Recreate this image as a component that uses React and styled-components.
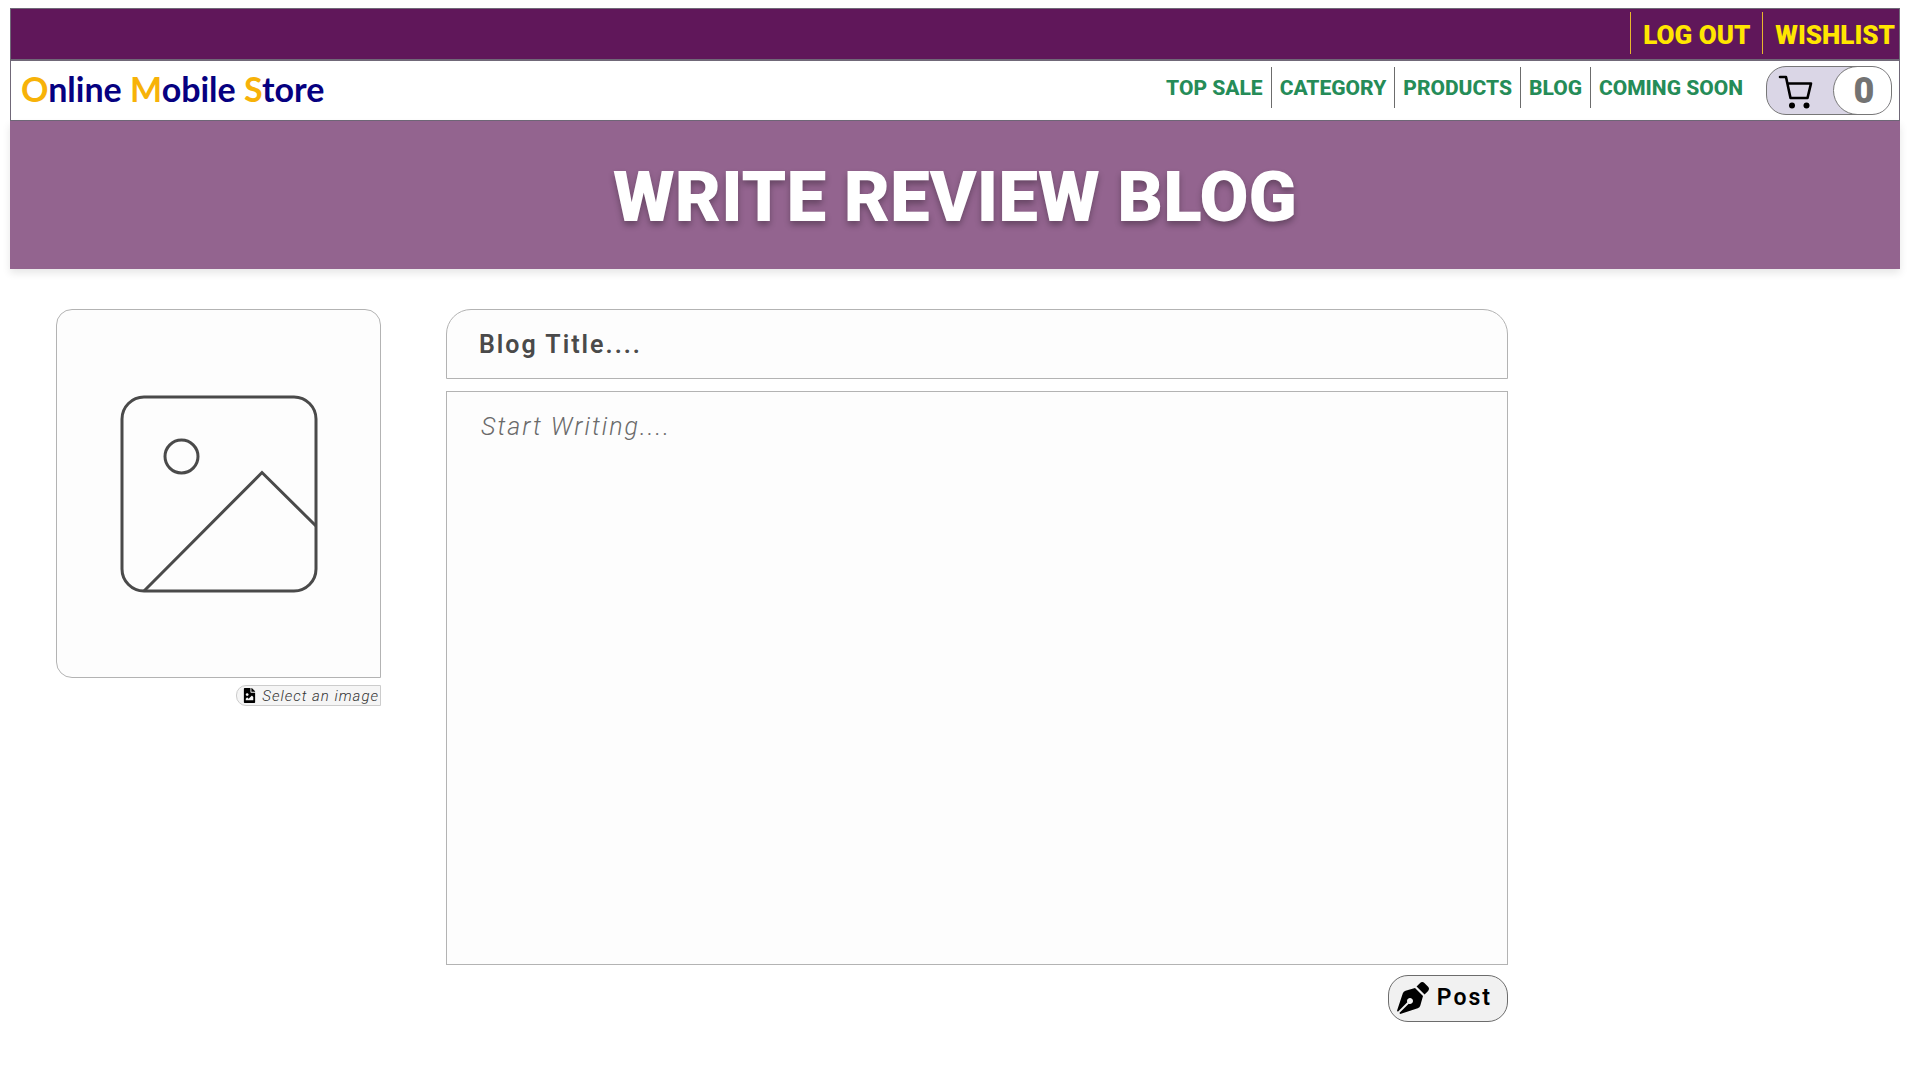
import React from "react";
import styled, { createGlobalStyle } from "styled-components";
import { FaPenNib, FaFileImage } from "react-icons/fa";

const GlobalStyle = createGlobalStyle`
  * { box-sizing: border-box; }
  body {
    margin: 0;
    background: #fff;
    font-family: Roboto, "Open Sans", sans-serif;
  }
`;

const display = `Roboto, "Open Sans", sans-serif`;

const Page = styled.div`
  padding: 8px 20px 48px 10px;
`;

const TopBar = styled.nav`
  display: flex;
  justify-content: flex-end;
  align-items: flex-start;
  height: 52px;
  padding-top: 3px;
  border: 1px solid #706878;
  background: #60175a;
`;

const TopLink = styled.a`
  height: 42px;
  padding: 0 ${(p) => (p.$last ? 4 : 12)}px 0 12px;
  border-left: 1px solid #e8b82c;
  color: #ffe600;
  font: 900 26px/46px ${display};
  text-decoration: none;
  text-transform: uppercase;
`;

const Header = styled.header`
  display: flex;
  align-items: center;
  height: 61px;
  padding: 0 7px 0 10px;
  border: 1px solid #706878;
`;

const Logo = styled.a`
  margin-right: auto;
  padding-bottom: 4px;
  color: #060080;
  font: 700 34px/40px Lato, sans-serif;
  text-decoration: none;
  white-space: nowrap;
`;

const Capital = styled.span`
  color: #f7b208;
`;

const MainNav = styled.nav`
  display: flex;
  padding-bottom: 6px;
`;

const NavLink = styled.a`
  height: 41px;
  padding: 0 8px;
  border-left: ${(p) => (p.$first ? 0 : 1)}px solid #6c6c6c;
  color: #258c58;
  font: 800 21px/42px ${display};
  text-decoration: none;
  text-transform: uppercase;
  white-space: nowrap;
`;

const CartButton = styled.button`
  display: flex;
  justify-content: space-between;
  align-items: stretch;
  width: 126px;
  height: 49px;
  margin-left: 15px;
  padding: 0;
  overflow: hidden;
  border: 1px solid #777;
  border-radius: 20px;
  background: #dad6e6;
`;

const CartIcon = styled.svg`
  width: 36px;
  height: 36px;
  margin: 7px 0 0 11px;
`;

const CartCount = styled.span`
  width: 59px;
  margin: -1px;
  padding-left: 3px;
  border: 1px solid #777;
  border-radius: 25px 20px 20px 25px;
  background: #fff;
  color: #737373;
  font: 900 36px/48px ${display};
  text-align: center;
`;

const Banner = styled.div`
  display: flex;
  justify-content: center;
  align-items: center;
  height: 148px;
  padding-top: 4px;
  background: #93648f;
  box-shadow: 0 4px 8px rgba(0, 0, 0, 0.1);
`;

const Title = styled.h1`
  margin: 0;
  color: #fff;
  font: 900 71px/80px ${display};
  text-shadow: 0 4px 6px rgba(0, 0, 0, 0.3);
  text-transform: uppercase;
`;

const Editor = styled.form`
  display: flex;
  align-items: flex-start;
  gap: 65px;
  padding: 40px 46px 0;
`;

const ImageColumn = styled.div`
  display: flex;
  flex: 0 0 325px;
  flex-direction: column;
  align-items: flex-end;
  gap: 7px;
`;

const Preview = styled.div`
  display: flex;
  justify-content: center;
  align-items: center;
  width: 100%;
  height: 369px;
  border: 1px solid #b3b3b3;
  border-radius: 16px 16px 0 16px;
  background: #fdfdfd;
`;

const PictureIcon = styled.svg`
  width: 198px;
  height: 198px;
  fill: none;
  stroke: #4a4a4a;
  stroke-width: 3;
`;

const SelectImage = styled.label`
  position: relative;
  display: flex;
  align-items: center;
  gap: 5px;
  height: 21px;
  padding: 0 1px 0 5px;
  border: 1px solid #ccc;
  border-radius: 10px 0 0 10px;
  background: #f5f5f5;
  color: #333;
  font-size: 15px;
  font-style: italic;
  font-weight: 300;
  letter-spacing: 1px;
  cursor: pointer;

  svg { color: #000; }
`;

const HiddenFile = styled.input`
  position: absolute;
  inset: 0;
  width: 100%;
  height: 100%;
  opacity: 0;
`;

const TextColumn = styled.div`
  display: flex;
  flex: 0 1 1062px;
  flex-direction: column;
  min-width: 0;
`;

const BlogTitle = styled.input`
  height: 70px;
  margin-bottom: 12px;
  padding: 0 32px;
  border: 1px solid #b3b3b3;
  border-radius: 25px 25px 0 0;
  background: #fdfdfd;
  color: #4a4a4a;
  font: 600 25px/32px Roboto, sans-serif;
  letter-spacing: 2px;

  &::placeholder { color: #4a4a4a; opacity: 1; }
`;

const BlogText = styled.textarea`
  height: 574px;
  margin-bottom: 10px;
  padding: 19px 34px;
  border: 1px solid #b3b3b3;
  background: #fdfdfd;
  font: italic 300 25px/32px Roboto, sans-serif;
  letter-spacing: 2px;
  resize: none;

  &::placeholder { color: #6a6a6a; opacity: 1; }
`;

const PostButton = styled.button`
  display: flex;
  align-items: center;
  align-self: flex-end;
  gap: 8px;
  height: 47px;
  padding: 0 15px 2px 8px;
  border: 1px solid #6c6c6c;
  border-radius: 20px;
  background: #f1f1f1;
  color: #000;
  font: 600 23px/32px Roboto, sans-serif;
  letter-spacing: 2px;
`;

const navItems = ["Top Sale", "Category", "Products", "Blog", "Coming Soon"];

export default function App() {
  return (
    <Page>
      <GlobalStyle />
      <TopBar aria-label="Account">
        <TopLink href="#logout">Log out</TopLink>
        <TopLink href="#wishlist" $last>Wishlist</TopLink>
      </TopBar>
      <Header>
        <Logo href="#home">
          <Capital>O</Capital>nline <Capital>M</Capital>obile <Capital>S</Capital>tore
        </Logo>
        <MainNav aria-label="Main">
          {navItems.map((item, i) => (
            <NavLink key={item} href="#nav" $first={i === 0}>{item}</NavLink>
          ))}
        </MainNav>
        <CartButton type="button" aria-label="Cart, 0 items">
          <CartIcon viewBox="0 0 36 36" fill="none" stroke="#000" strokeWidth="2.6" strokeLinecap="round" strokeLinejoin="round">
            <path d="M2 3h6l4.500 21h17l3.500-14.500H9.500" />
            <circle cx="14" cy="31.500" r="3" fill="#000" stroke="none" />
            <circle cx="28.500" cy="31.500" r="3" fill="#000" stroke="none" />
          </CartIcon>
          <CartCount>0</CartCount>
        </CartButton>
      </Header>
      <Banner>
        <Title>Write Review Blog</Title>
      </Banner>
      <Editor onSubmit={(e) => e.preventDefault()}>
        <ImageColumn>
          <Preview>
            <PictureIcon viewBox="0 0 198 198" aria-hidden="true">
              <rect x="2" y="2" width="194" height="194" rx="22" />
              <circle cx="61.500" cy="61.500" r="16.500" />
              <path d="M24 196L142 77.500L196 131" />
            </PictureIcon>
          </Preview>
          <SelectImage htmlFor="image">
            <FaFileImage size={15} />
            Select an image
            <HiddenFile id="image" type="file" accept="image/*" />
          </SelectImage>
        </ImageColumn>
        <TextColumn>
          <BlogTitle type="text" aria-label="Blog title" placeholder="Blog Title...." />
          <BlogText aria-label="Blog text" placeholder="Start Writing...." />
          <PostButton type="submit">
            <FaPenNib size={32} />
            Post
          </PostButton>
        </TextColumn>
      </Editor>
    </Page>
  );
}
